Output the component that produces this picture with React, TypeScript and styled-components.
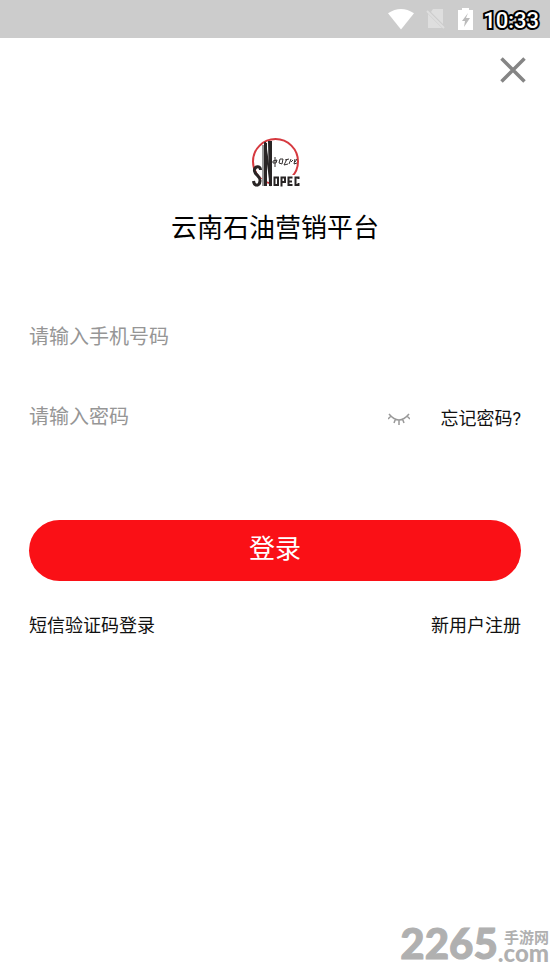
import React, { useState } from "react";
import styled, { createGlobalStyle } from "styled-components";

const GlobalStyle = createGlobalStyle`
  * { box-sizing: border-box; }
  body {
    margin: 0;
    background: #fff;
    color: #111;
    font-family: Roboto, "Noto Sans CJK SC", sans-serif;
  }
  button, input { font-family: inherit; }
`;

const Screen = styled.div`
  position: relative;
  display: flex;
  flex-direction: column;
  min-height: 100vh;
`;

const StatusBar = styled.header`
  display: flex;
  align-items: center;
  justify-content: flex-end;
  height: 38px;
  padding-right: 11px;
  background: #ccc;
`;

const StatusIcon = styled.svg<{ $gap: number }>`
  display: block;
  flex: none;
  margin-right: ${(p) => p.$gap}px;
`;

const Clock = styled.time`
  padding-top: 3px;
  color: #fff;
  font: 500 22px/35px Roboto, sans-serif;
  -webkit-text-stroke: 4px #000;
  paint-order: stroke fill;
`;

const TopRow = styled.div`
  display: flex;
  justify-content: flex-end;
  padding: 18px 23px 0 0;
`;

const IconButton = styled.button`
  display: flex;
  padding: 0;
  border: 0;
  background: none;
  cursor: pointer;
`;

const Brand = styled.div`
  display: flex;
  flex-direction: column;
  align-items: center;
  padding-top: 53px;
`;

const Title = styled.h1`
  margin: 17px 0 0;
  color: #000;
  font-size: 26px;
  line-height: 40px;
  font-weight: 400;
`;

const Form = styled.form`
  display: flex;
  flex-direction: column;
  padding: 69px 29px 0;
`;

const Field = styled.div`
  display: flex;
  align-items: center;
  height: 40px;
  margin-bottom: 40px;
`;

const TextInput = styled.input`
  flex: 1;
  min-width: 0;
  height: 40px;
  padding: 0;
  border: 0;
  outline: 0;
  background: none;
  color: #111;
  font-size: 20px;
  &::placeholder { color: #969696; opacity: 1; }
`;

const FieldActions = styled.div`
  display: flex;
  align-items: center;
  gap: 30px;
  padding: 4px 0 0 12px;
`;

const TextLink = styled.a`
  color: #111;
  font-size: 18px;
  line-height: 28px;
  text-decoration: none;
  white-space: nowrap;
`;

const LoginButton = styled.button`
  height: 61px;
  margin-top: 43px;
  padding: 0 0 8px;
  border: 0;
  border-radius: 31px;
  background: #fa1016;
  color: #fff;
  font-size: 26px;
  cursor: pointer;
`;

const LinkRow = styled.nav`
  display: flex;
  justify-content: space-between;
  margin-top: 31px;
`;

const Watermark = styled.div`
  position: absolute;
  right: 1px;
  bottom: 12px;
  display: flex;
  align-items: flex-end;
  color: #b0b0b0;
`;

const MarkNumber = styled.span`
  font: 900 42px/44px Lato, sans-serif;
  -webkit-text-stroke: 1px #b0b0b0;
`;

const MarkSide = styled.span`
  display: flex;
  flex-direction: column;
  align-items: flex-end;
  padding-bottom: 3px;
`;

const MarkName = styled.span`
  font: 700 15px/14px Lato, "Noto Sans CJK SC", sans-serif;
`;

const MarkDomain = styled.span`
  font: 900 24px/18px Lato, sans-serif;
`;

function SinopecLogo() {
  return (
    <svg width="50" height="54" viewBox="0 0 50 54" role="img" aria-label="SINOPEC">
      <circle cx="25.500" cy="24.500" r="22.500" fill="none" stroke="#d6393f" strokeWidth="2" />
      <path d="M6 32H12V54H2V42ZM22 38H50V54H22Z" fill="#fff" />
      <path d="M4 30Q6 37 12 42" fill="none" stroke="#d6393f" strokeWidth="1" />
      <path
        d="M10.500 33C10.500 28 4 29 4.500 34C5 38 10.500 39 10 44C9.500 50 4 49 3.500 44"
        fill="none"
        stroke="#292525"
        strokeWidth="3"
      />
      <path d="M13 8V49" stroke="#999" strokeWidth="2" />
      <path d="M14 6H17V49H14ZM18 4H22V49H19Z" fill="#292525" />
      <path d="M15 5L21 49" stroke="#292525" strokeWidth="2" />
      <path
        d="M24.500 40.500H28V48H24.500ZM31.500 49.500V40.500H35V45H32M42.500 40.500H38.500V48H42.500M38.500 44.500H42M48.500 42V40.500H45.500V48H48.500V46"
        fill="none"
        stroke="#292525"
        strokeWidth="2"
      />
      <path
        d="M23 24L27 23L26 26L23 26ZM25 20V30M30 22L33 22L32 27L29 26ZM35 23L39 22M37 22L34 28L38 27M41 22L39 27M43 23L41 25M45 22L44 27L47 26M47 22L45 25"
        fill="none"
        stroke="#353030"
        strokeWidth="1"
      />
    </svg>
  );
}

export default function App() {
  const [visible, setVisible] = useState(false);
  return (
    <Screen>
      <GlobalStyle />
      <StatusBar>
        <StatusIcon $gap={12} width="26" height="22" viewBox="0 0 27 22" aria-hidden="true">
          <path d="M0 5Q13.500-4 27 5L13.500 22Z" fill="#fff" />
        </StatusIcon>
        <StatusIcon $gap={12} width="20" height="22" viewBox="0 0 20 22" aria-hidden="true">
          <path d="M7 1H17V16L5 4ZM2 6L16 20H2Z" fill="#dedede" />
          <path d="M1 3L18 20" stroke="#dedede" strokeWidth="2" />
        </StatusIcon>
        <StatusIcon $gap={10} width="15" height="22" viewBox="0 0 15 22" aria-hidden="true">
          <path d="M4 0H11V2H15V22H0V2H4Z" fill="#fff" />
          <path d="M10 5L4 13H7L6 19L12 10H8Z" fill="#bbb" />
        </StatusIcon>
        <Clock>10:33</Clock>
      </StatusBar>
      <TopRow>
        <IconButton type="button" aria-label="关闭">
          <svg width="28" height="28" viewBox="0 0 28 28">
            <path d="M2.500 2.500L25.500 25.500M25.500 2.500L2.500 25.500" stroke="#858585" strokeWidth="3.500" />
          </svg>
        </IconButton>
      </TopRow>
      <Brand>
        <SinopecLogo />
        <Title>云南石油营销平台</Title>
      </Brand>
      <Form onSubmit={(e) => e.preventDefault()}>
        <Field>
          <TextInput type="tel" aria-label="手机号码" placeholder="请输入手机号码" />
        </Field>
        <Field>
          <TextInput type={visible ? "text" : "password"} aria-label="密码" placeholder="请输入密码" />
          <FieldActions>
            <IconButton type="button" aria-label="显示密码" onClick={() => setVisible(!visible)}>
              <svg width="22" height="14" viewBox="0 0 22 14" fill="none" stroke="#999" strokeWidth="1.500">
                <path d="M1 2Q11 14 21 2M3 4L0 7M7.500 7L6 11M11 8V13M14.500 7L16 11M19 4L22 7" />
              </svg>
            </IconButton>
            <TextLink href="#forgot">忘记密码?</TextLink>
          </FieldActions>
        </Field>
        <LoginButton type="submit">登录</LoginButton>
        <LinkRow>
          <TextLink href="#sms">短信验证码登录</TextLink>
          <TextLink href="#register">新用户注册</TextLink>
        </LinkRow>
      </Form>
      <Watermark>
        <MarkNumber>2265</MarkNumber>
        <MarkSide>
          <MarkName>手游网</MarkName>
          <MarkDomain>.com</MarkDomain>
        </MarkSide>
      </Watermark>
    </Screen>
  );
}
